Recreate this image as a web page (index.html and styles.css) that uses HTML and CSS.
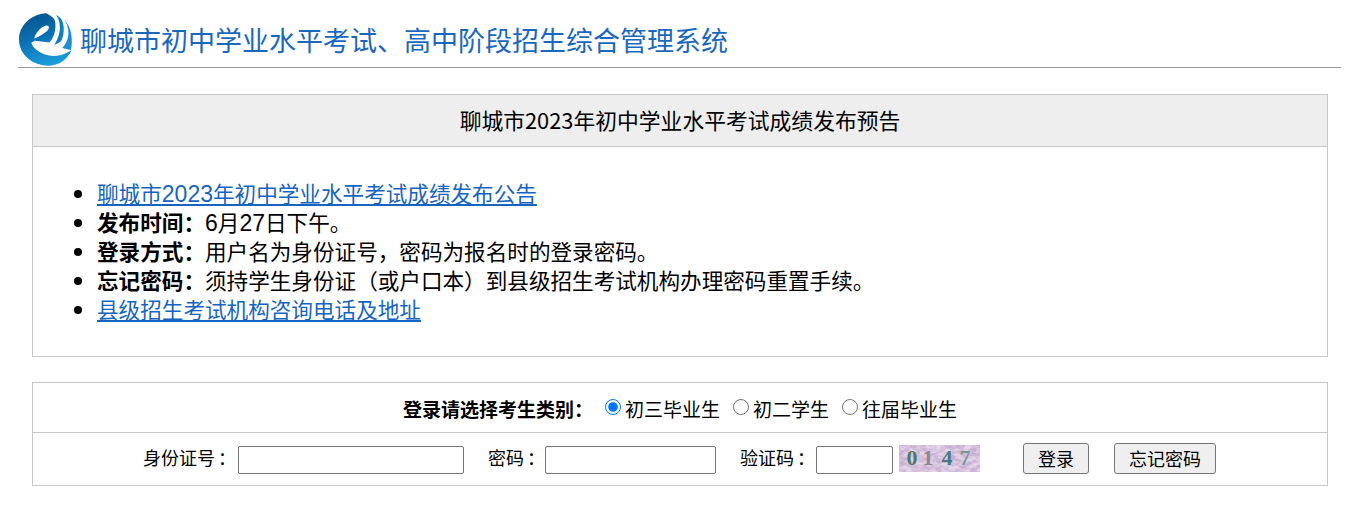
FILE: index.html
```html
<!DOCTYPE html>
<html lang="zh-CN">
<head>
  <meta charset="UTF-8">
  <title>聊城市初中学业水平考试、高中阶段招生综合管理系统</title>
  <link rel="stylesheet" href="styles.css">
</head>
<body>
  <div class="header">
    <svg class="logo" viewBox="22 14 147 160" preserveAspectRatio="none" width="53" height="53">
      <defs>
        <linearGradient id="logoBlue" x1="0.3" y1="0" x2="0.6" y2="1">
          <stop offset="0" stop-color="#07548f"/>
          <stop offset="0.5" stop-color="#0c74b6"/>
          <stop offset="1" stop-color="#1c9fdc"/>
        </linearGradient>
      </defs>
      <path d="M98,15C55,18 22,52 22,94C22,140 60,173 105,173C135,173 158,152 168,126C150,140 125,148 100,141C78,135 62,122 56,104L66,98L108,103C124,90 132,70 128,50C126,36 114,24 98,15Z" fill="url(#logoBlue)"/>
      <path d="M64,92C68,74 82,56 97,52C106,50 108,60 99,69C90,78 78,85 64,92Z" fill="#fff"/>
      <path d="M122,22C133,40 135,72 114,108L106,104C122,86 130,50 116,20Z" fill="#fff"/>
      <path d="M124,20C138,36 142,74 120,110C140,104 155,84 152,60C150,44 140,28 124,20Z" fill="#0f7cbf"/>
      <path d="M138,30C150,50 150,88 130,116L142,120C158,100 162,70 145,36Z" fill="#fff"/>
      <path d="M146,33C162,52 166,92 142,120L166,126C172,92 168,56 146,33Z" fill="#1d8fcf"/>
    </svg>
    <h1 class="site-title">聊城市初中学业水平考试、高中阶段招生综合管理系统</h1>
  </div>

  <div class="panel notice">
    <div class="notice-title">聊城市2023年初中学业水平考试成绩发布预告</div>
    <ul class="notice-list">
      <li><a href="#">聊城市<span class="num">2023</span>年初中学业水平考试成绩发布公告</a></li>
      <li><b>发布时间：</b><span class="num">6</span>月<span class="num">27</span>日下午。</li>
      <li><b>登录方式：</b>用户名为身份证号，密码为报名时的登录密码。</li>
      <li><b>忘记密码：</b>须持学生身份证（或户口本）到县级招生考试机构办理密码重置手续。</li>
      <li><a href="#">县级招生考试机构咨询电话及地址</a></li>
    </ul>
  </div>

  <form class="panel login">
    <div class="login-type">
      <b class="type-label">登录请选择考生类别：</b>
      <label class="radio"><input type="radio" name="kind" checked>初三毕业生</label>
      <label class="radio"><input type="radio" name="kind">初二学生</label>
      <label class="radio"><input type="radio" name="kind">往届毕业生</label>
    </div>
    <div class="login-fields">
      <label class="field-label">身份证号<span class="colon">：</span></label>
      <input class="input input-id" type="text">
      <label class="field-label">密码<span class="colon">：</span></label>
      <input class="input input-pwd" type="password">
      <label class="field-label">验证码<span class="colon">：</span></label>
      <input class="input input-code" type="text">
      <svg class="captcha" viewBox="0 0 81 27" width="81" height="27">
        <defs>
          <filter id="noise" x="0" y="0" width="100%" height="100%">
            <feTurbulence type="fractalNoise" baseFrequency="0.14 0.24" numOctaves="3" seed="7"/>
            <feColorMatrix type="matrix" values="0 0 0 0 0.58  0 0 0 0 0.42  0 0 0 0 0.64  2.4 0 0 0 -0.7"/>
          </filter>
        </defs>
        <rect width="81" height="27" fill="#e6d9ea"/>
        <rect width="81" height="27" filter="url(#noise)"/>
        <text x="13" y="20" class="cap-digit cap-dark">0</text>
        <text x="29" y="20" class="cap-digit cap-grey">1</text>
        <text x="48" y="20" class="cap-digit cap-teal">4</text>
        <text x="66" y="20" class="cap-digit cap-soft">7</text>
      </svg>
      <button class="btn btn-login" type="button">登录</button>
      <button class="btn btn-forgot" type="button">忘记密码</button>
    </div>
  </form>
</body>
</html>
```

FILE: styles.css
```css
body {
  margin: 0;
  padding: 0 15px 0 18px;
  background: #fff;
  color: #000;
  font-family: "Noto Sans CJK SC", "Liberation Sans", sans-serif;
  font-weight: 400;
}

.header {
  display: flex;
  align-items: flex-start;
  height: 68px;
  padding-top: 13px;
  box-sizing: border-box;
  border-bottom: 1px solid #999;
}

.logo {
  margin: 0 8px 0 1px;
  flex: none;
}

.site-title {
  margin: 7px 0 0;
  font-size: 27px;
  line-height: 40px;
  font-weight: 400;
  color: #1a68bd;
}

.panel {
  margin: 0 13px 0 14px;
  border: 1px solid #c8c8c8;
}

.notice {
  margin-top: 26px;
}

.notice-title {
  height: 51px;
  line-height: 49px;
  text-align: center;
  font-size: 21.8px;
  background: #eee;
  border-bottom: 1px solid #c8c8c8;
}

.notice-list {
  margin: 0;
  padding: 31px 0 33px 64px;
  font-size: 21.6px;
  line-height: 29px;
}

.notice-list a {
  color: #1565c0;
}

.notice-list b {
  font-weight: 700;
}

.num {
  font-family: "Liberation Sans", sans-serif;
  font-size: 23px;
  line-height: 1;
}

.login {
  margin-top: 25px;
}

.login-type {
  display: flex;
  justify-content: center;
  align-items: center;
  height: 50px;
  padding-top: 1px;
  box-sizing: border-box;
  font-size: 19px;
  border-bottom: 1px solid #c8c8c8;
}

.type-label {
  font-size: 19px;
  font-weight: 700;
  margin-right: 7px;
}

.radio {
  display: flex;
  align-items: center;
}

.radio + .radio {
  margin-left: 8px;
}

.radio input {
  width: 16px;
  height: 16px;
  margin: 0 4px 2px 5px;
}

.login-fields {
  display: flex;
  align-items: center;
  height: 52px;
  padding-left: 110px;
  font-size: 18px;
}

.field-label {
  flex: none;
  margin-bottom: 4px;
  white-space: nowrap;
}

.colon {
  margin-left: 3px;
  margin-right: -3px;
}

.input {
  box-sizing: border-box;
  height: 28px;
  margin-top: 2px;
  padding: 0;
  border: 1px solid #767676;
  border-radius: 2px;
  background: #fff;
}

.input-id {
  width: 226px;
  margin-left: 5px;
  margin-right: 24px;
}

.input-pwd {
  width: 171px;
  margin-left: 3px;
  margin-right: 24px;
}

.input-code {
  width: 77px;
  margin-left: 4px;
  margin-right: 6px;
}

.captcha {
  flex: none;
  margin-bottom: 2px;
}

.cap-digit {
  font-family: "Liberation Serif", serif;
  font-size: 22px;
  font-weight: 700;
  text-anchor: middle;
}

.cap-dark {
  fill: #4a7a62;
}

.cap-grey {
  fill: #8d8890;
}

.cap-teal {
  fill: #4a7a82;
}

.cap-soft {
  fill: #7a9496;
}

.btn {
  box-sizing: border-box;
  height: 31px;
  margin-bottom: 1px;
  padding: 0 0 2px;
  font-family: inherit;
  font-size: 18px;
  font-weight: 400;
  color: #000;
  background: #efefef;
  border: 1px solid #767676;
  border-radius: 3px;
}

.btn-login {
  width: 66px;
  margin-left: 43px;
}

.btn-forgot {
  width: 102px;
  margin-left: 25px;
}
```
